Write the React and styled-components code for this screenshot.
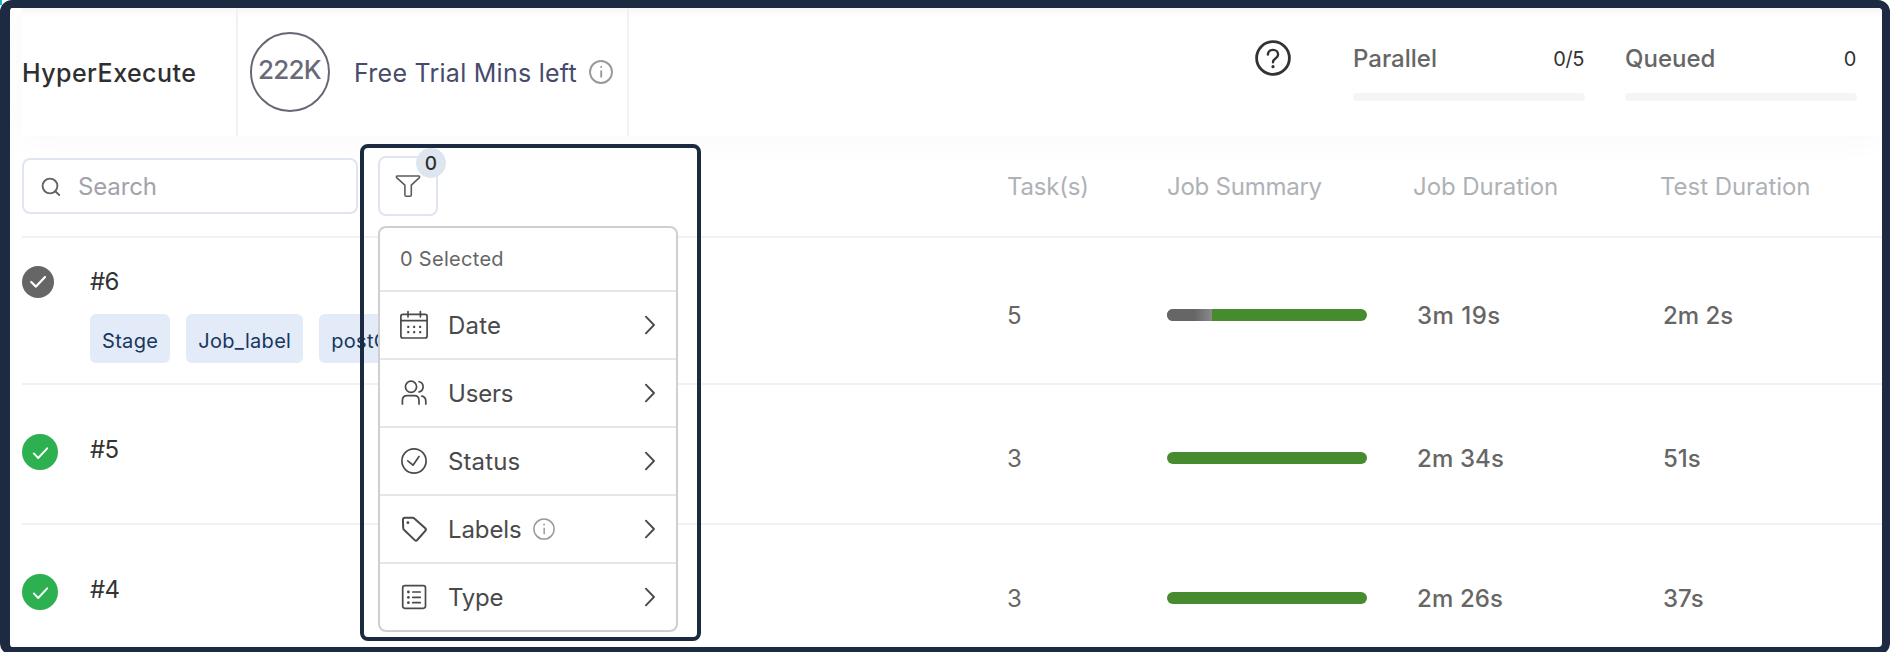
import React from "react";
import styled, { createGlobalStyle } from "styled-components";

const GlobalStyle = createGlobalStyle`
  *, *::before, *::after { box-sizing: border-box; }
  body {
    margin: 0;
    background: #ffffff;
    font-family: Inter, "Liberation Sans", sans-serif;
    overflow: hidden;
  }
`;

/* ---------- shell ---------- */

const Page = styled.div`
  width: 1890px;
  height: 652px;
  overflow: hidden;
  background: linear-gradient(#12b3c4, #12b3c4) 0 0 / 2px 5px no-repeat, #ffffff;
`;

const Frame = styled.main`
  position: relative;
  width: 100%;
  height: 655px;
  padding-left: 12px;
  display: flex;
  flex-direction: column;
  background: #ffffff;
  background-clip: padding-box;
  border: solid #1d2b42;
  border-width: 8px 8px 8px 10px;
  border-radius: 12px;
  overflow: hidden;
`;

/* ---------- header ---------- */

const Header = styled.header`
  position: relative;
  flex: none;
  display: flex;
  height: 128px;
  background: linear-gradient(#f6f6f7, #ffffff 9px);
  box-shadow: 0 2px 32px rgba(0, 0, 0, 0.03);
`;

const Brand = styled.h1`
  margin: 0;
  width: 216px;
  display: flex;
  align-items: center;
  border-right: 2px solid #f0f0f7;
  color: #2f2f31;
  font-size: 25px;
  font-weight: 500;
  line-height: 30px;
  letter-spacing: 0.45px;
  span { padding-top: 2px; }
`;

const Trial = styled.section`
  width: 391px;
  padding-left: 12px;
  display: flex;
  align-items: center;
  border-right: 2px solid #f0f0f7;
`;

const Minutes = styled.div`
  width: 80px;
  height: 80px;
  display: flex;
  align-items: center;
  justify-content: center;
  border: 2.5px solid #666775;
  border-radius: 50%;
  color: #696a78;
  font-size: 26px;
  font-weight: 450;
  line-height: 32px;
  letter-spacing: -0.75px;
  padding: 0 1px 5px 0;
`;

const TrialLabel = styled.div`
  margin-left: 24px;
  padding-top: 2px;
  width: 235px;
  color: #464b6b;
  font-size: 25px;
  line-height: 30px;
  letter-spacing: 0.26px;
  white-space: nowrap;
`;

const Usage = styled.section`
  margin-left: auto;
  padding-right: 25px;
  display: flex;
  align-items: flex-start;
`;

const HelpButton = styled.span`
  display: flex;
  margin: 32px 62px 0 0;
`;

const Meter = styled.div`
  width: 232px;
  margin-left: ${(p) => (p.$first ? 0 : 40)}px;
  padding-top: 37px;
`;

const MeterHead = styled.div`
  display: flex;
  justify-content: space-between;
  align-items: center;
  height: 28px;
  line-height: 28px;
  margin-bottom: 20px;
`;

const MeterName = styled.span`
  color: #666666;
  font-size: 24px;
  font-weight: 500;
`;

const MeterValue = styled.span`
  color: #333333;
  font-size: 20px;
  letter-spacing: -0.4px;
  padding: 0 1px 1px 0;
`;

const MeterTrack = styled.div`
  height: 8px;
  border-radius: 4px;
  background: #f3f5f7;
`;

/* ---------- table ---------- */

const Columns = styled.div`
  display: grid;
  grid-template-columns: 985px 160px 246px 247px 1fr;
  color: ${(p) => (p.$head ? "#aeb2b7" : "#666666")};
  font-size: 24px;
  line-height: 30px;
`;

const HeadRow = styled(Columns)`
  flex: none;
  height: 102px;
  padding-top: 20px;
  border-bottom: 2px solid #f0f0f6;
`;

const HeadCell = styled.div`
  padding-top: 16px;
  letter-spacing: ${(p) => p.$spacing || 0}px;
  white-space: nowrap;
`;

const Tools = styled.div`
  display: flex;
  align-items: flex-start;
  gap: 20px;
`;

const SearchBox = styled.label`
  width: 336px;
  height: 56px;
  margin-top: 2px;
  padding: 2px 0 0 17px;
  display: flex;
  align-items: center;
  gap: 17px;
  border: 2px solid #dfe5f2;
  border-radius: 8px;
  color: #a2a2ac;
  letter-spacing: -0.15px;
`;

const FilterButton = styled.button`
  position: relative;
  width: 60px;
  height: 60px;
  padding: 0;
  border: 2px solid #dfe5f2;
  border-radius: 8px;
  background: #ffffff;
  display: flex;
  align-items: center;
  justify-content: center;
`;

const Badge = styled.span`
  position: absolute;
  top: -10px;
  right: -10px;
  width: 30px;
  height: 30px;
  border-radius: 50%;
  background: #dfe5ef;
  color: #2d2d30;
  font: 500 19px/31px Inter, sans-serif;
  text-align: center;
`;

const JobRow = styled(Columns)`
  flex: none;
  height: ${(p) => p.$height}px;
  border-bottom: ${(p) => (p.$last ? "none" : "2px solid #f0f0f6")};
`;

const Job = styled.div`
  display: flex;
  align-items: flex-start;
  padding-top: ${(p) => (p.$tagged ? 28 : 49)}px;
`;

const JobIcon = styled.span`
  width: 68px;
  display: flex;
`;

const JobName = styled.div`
  padding-top: 1px;
  color: #333333;
  letter-spacing: -0.6px;
`;

const Tags = styled.div`
  display: flex;
  gap: 16px;
  margin-top: 17px;
`;

const Tag = styled.span`
  height: 49px;
  padding: 6px 12px 0;
  border-radius: 6px;
  background: #e3eaf8;
  color: #17375f;
  font-size: 20px;
  line-height: 42px;
  letter-spacing: 0.31px;
`;

const Cell = styled.div`
  padding: ${(p) => (p.$tall ? 63 : 59)}px 0 0 ${(p) => p.$indent || 0}px;
  font-weight: ${(p) => (p.$strong ? 500 : 400)};
  letter-spacing: ${(p) => p.$spacing || 0}px;
`;

const Summary = styled.div`
  display: flex;
  width: 200px;
  height: 12px;
  margin-top: ${(p) => (p.$tall ? 71 : 67)}px;
  border-radius: 6px;
  overflow: hidden;
  background: #468c2f;
`;

const Skipped = styled.div`
  width: 45px;
  background: linear-gradient(90deg, #666666 60%, #8a8a8c);
`;

/* ---------- filter menu ---------- */

const Highlight = styled.div`
  position: absolute;
  left: 350px;
  top: 136px;
  width: 341px;
  height: 497px;
  border: 4px solid #1b2941;
  border-radius: 8px;
  pointer-events: none;
`;

const Menu = styled.div`
  position: absolute;
  left: 368px;
  top: 218px;
  width: 300px;
  border: 2px solid #cfcfcf;
  border-radius: 8px;
  background: #ffffff;
`;

const Selected = styled.div`
  height: 62px;
  padding: 0 20px;
  color: #666666;
  font-size: 20px;
  line-height: 63px;
  letter-spacing: 0.3px;
`;

const MenuItem = styled.div`
  height: 68px;
  padding: 0 19px 0 18px;
  display: flex;
  align-items: center;
  border-top: 2px solid #e6e6e6;
  color: #4a4a4a;
  font-size: 24px;
`;

const MenuLabel = styled.span`
  margin: 0 11px 0 18px;
  padding-top: 2px;
  line-height: 30px;
  letter-spacing: ${(p) => p.$spacing || 0}px;
`;

const Arrow = styled.span`
  margin-left: auto;
  display: flex;
`;

/* ---------- icons ---------- */

const Svg = styled.svg`
  display: block;
  flex: none;
  overflow: visible;
  fill: none;
  stroke: ${(p) => p.$color || "#4a4a4a"};
  stroke-width: ${(p) => p.$weight || 1.7};
  stroke-linecap: round;
  stroke-linejoin: round;
`;

const InfoIcon = ({ size, weight }) => (
  <Svg width={size} height={size} viewBox="0 0 24 24" $color="#999999" $weight={weight}>
    <circle cx="12" cy="12" r="11" />
    <path d="M12.2 10.6v7" strokeLinecap="butt" />
    <circle cx="12.1" cy="7.1" r="1" fill="#999999" stroke="none" />
  </Svg>
);

const HelpIcon = () => (
  <Svg width="36" height="36" viewBox="0 0 36 36" $color="#333333" $weight={2.8}>
    <circle cx="18" cy="18" r="16.4" />
    <path d="M12.9 14.6c0-2.8 2.2-4.7 5.1-4.7s5.1 2 5.1 4.6c0 2-1.2 3.1-2.6 4.1-1.6 1.1-2.5 1.8-2.5 3.6" strokeWidth="2.4" />
    <circle cx="18" cy="26.7" r="1.6" fill="#333333" stroke="none" />
  </Svg>
);

const SearchIcon = () => (
  <Svg width="20" height="20" viewBox="0 0 20 20" $color="#636363" $weight={1.9}>
    <circle cx="9" cy="9" r="7.4" />
    <path d="M14.3 14.3l3.9 3.7" />
  </Svg>
);

const FunnelIcon = () => (
  <Svg width="26" height="24" viewBox="0 0 26 24" $color="#5c5c5c" $weight={1.6}>
    <path d="M2.2 2H23.8Q25 2.2 24.4 3.6L16.3 11.2V20.8Q16.3 22.2 15 22.2H11.2Q9.9 22.2 9.9 20.8V11.2L1.6 3.6Q1 2.2 2.2 2Z" />
  </Svg>
);

const CalendarIcon = () => (
  <Svg width="32" height="32" viewBox="0 0 32 32">
    <rect x="2.9" y="5.4" width="26.2" height="23.6" rx="2" />
    <path d="M3 11.6H29M10 2.6V7.8M22.4 2.6V7.8" />
    <g fill="#4a4a4a" stroke="none">
      {[9.2, 15.1, 21.1].map((x) =>
        [16.7, 22].map((y) => <rect key={`${x}-${y}`} x={x} y={y} width="2.1" height="2.3" rx="0.4" />)
      )}
    </g>
  </Svg>
);

const UsersIcon = () => (
  <Svg width="32" height="32" viewBox="0 0 32 32">
    <circle cx="13" cy="9.8" r="5.6" />
    <path d="M4.4 27.8V23.5Q4.4 18.6 9.2 18.6H16.4Q21 18.6 21 23.5V27.8" strokeLinecap="butt" />
    <path d="M20.4 4.5C23.4 5 25.1 7.2 25.1 9.7S23.4 14.5 20.4 15.1M23.2 18.9Q27.8 19.8 27.8 24.2V27.8" strokeLinecap="butt" />
  </Svg>
);

const StatusIcon = () => (
  <Svg width="32" height="32" viewBox="0 0 32 32">
    <circle cx="16" cy="16" r="12.1" />
    <path d="M9.8 15.8L15 20.2L21 11.4" />
  </Svg>
);

const TagIcon = () => (
  <Svg width="32" height="32" viewBox="0 0 32 32" $weight={2}>
    <path d="M7 4.7H14.6Q15.6 4.7 16.3 5.4L27.3 15.3Q28.5 16.6 27.3 17.8L19.2 27Q18 28.3 16.8 27.1L6.2 17Q5.3 16.1 5.2 15L4.9 6.7Q5 4.8 7 4.7Z" />
    <circle cx="9.9" cy="9.7" r="1.4" fill="#4a4a4a" stroke="none" />
  </Svg>
);

const TypeIcon = () => (
  <Svg width="32" height="32" viewBox="0 0 32 32">
    <rect x="4.7" y="4.7" width="22.8" height="22.6" rx="2.2" />
    <path d="M14.8 11H22.2M14.8 16.4H22.2M14.8 21.7H22.2" />
    <g fill="#4a4a4a" stroke="none">
      <circle cx="10.4" cy="11" r="1.4" />
      <circle cx="10.4" cy="16.4" r="1.4" />
      <circle cx="10.4" cy="21.7" r="1.4" />
    </g>
  </Svg>
);

const ChevronIcon = () => (
  <Svg width="14" height="20" viewBox="0 0 14 20" $weight={1.9}>
    <path d="M2.9 1.7L11 10L2.9 18.3" />
  </Svg>
);

const DoneIcon = ({ size, color }) =>
  size === 32 ? (
    <Svg width="32" height="32" viewBox="0 0 32 32" $color="#ffffff" $weight={2.2}>
      <circle cx="16" cy="16" r="16" fill={color} stroke="none" />
      <path d="M9.2 16L14 20.6L23 11" />
    </Svg>
  ) : (
    <Svg width="36" height="36" viewBox="0 0 36 36" $color="#ffffff" $weight={1.9}>
      <circle cx="18" cy="18" r="18" fill={color} stroke="none" />
      <path d="M11.8 19.4L16.2 24L25.2 14.3" />
    </Svg>
  );

/* ---------- data ---------- */

const jobs = [
  {
    id: "#6", tags: ["Stage", "Job_label", "postCheck"], tasks: 5, skipped: true, height: 147,
    job: "3m 19s", jobSpacing: 0.5, test: "2m 2s", size: 32, color: "#666666",
  },
  { id: "#5", tasks: 3, height: 140, job: "2m 34s", jobSpacing: 0.14, test: "51s", size: 36, color: "#2db04f" },
  { id: "#4", tasks: 3, height: 122, job: "2m 26s", jobSpacing: 0.14, test: "37s", size: 36, color: "#2db04f" },
];

const filters = [
  { name: "Date", Icon: CalendarIcon, spacing: 0.2 },
  { name: "Users", Icon: UsersIcon, spacing: -0.2 },
  { name: "Status", Icon: StatusIcon, spacing: 0.12 },
  { name: "Labels", Icon: TagIcon, spacing: -0.1, info: true },
  { name: "Type", Icon: TypeIcon, spacing: -0.25 },
];

export default function App() {
  return (
    <Page>
      <GlobalStyle />
      <Frame>
        <Header>
          <Brand><span>HyperExecute</span></Brand>
          <Trial>
            <Minutes>222K</Minutes>
            <TrialLabel>Free Trial Mins left</TrialLabel>
            <InfoIcon size={24} weight={1.9} />
          </Trial>
          <Usage>
            <HelpButton><HelpIcon /></HelpButton>
            <Meter $first>
              <MeterHead><MeterName>Parallel</MeterName><MeterValue>0/5</MeterValue></MeterHead>
              <MeterTrack />
            </Meter>
            <Meter>
              <MeterHead><MeterName>Queued</MeterName><MeterValue>0</MeterValue></MeterHead>
              <MeterTrack />
            </Meter>
          </Usage>
        </Header>

        <HeadRow $head>
          <Tools>
            <SearchBox><SearchIcon />Search</SearchBox>
            <FilterButton><FunnelIcon /><Badge>0</Badge></FilterButton>
          </Tools>
          <HeadCell $spacing={-0.2}>Task(s)</HeadCell>
          <HeadCell $spacing={-0.25}>Job Summary</HeadCell>
          <HeadCell $spacing={-0.05}>Job Duration</HeadCell>
          <HeadCell $spacing={-0.05}>Test Duration</HeadCell>
        </HeadRow>

        {jobs.map((j, i) => (
          <JobRow key={j.id} $height={j.height} $last={i === jobs.length - 1}>
            <Job $tagged={!!j.tags}>
              <JobIcon><DoneIcon size={j.size} color={j.color} /></JobIcon>
              <div>
                <JobName>{j.id}</JobName>
                {j.tags && <Tags>{j.tags.map((t) => <Tag key={t}>{t}</Tag>)}</Tags>}
              </div>
            </Job>
            <Cell $tall={!!j.tags}>{j.tasks}</Cell>
            <Summary $tall={!!j.tags}>{j.skipped && <Skipped />}</Summary>
            <Cell $tall={!!j.tags} $strong $indent={4} $spacing={j.jobSpacing}>{j.job}</Cell>
            <Cell $tall={!!j.tags} $strong $indent={3}>{j.test}</Cell>
          </JobRow>
        ))}

        <Highlight />
        <Menu>
          <Selected>0 Selected</Selected>
          {filters.map(({ name, Icon, spacing, info }) => (
            <MenuItem key={name}>
              <Icon />
              <MenuLabel $spacing={spacing}>{name}</MenuLabel>
              {info && <InfoIcon size={22} weight={1.6} />}
              <Arrow><ChevronIcon /></Arrow>
            </MenuItem>
          ))}
        </Menu>
      </Frame>
    </Page>
  );
}
